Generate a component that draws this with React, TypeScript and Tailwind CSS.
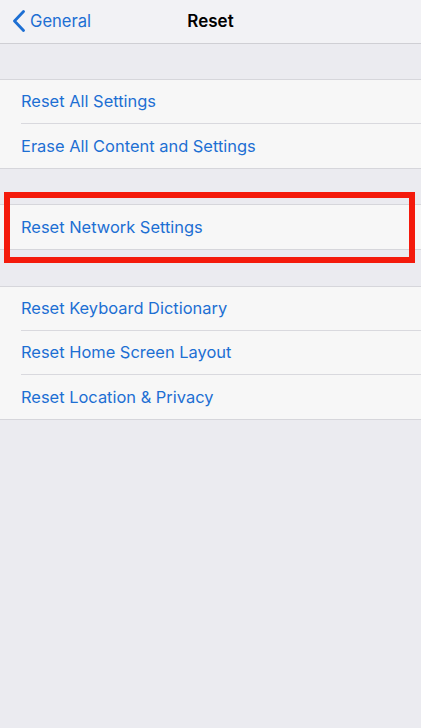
import { ReactNode } from 'react';

const font = { fontFamily: 'Inter, "Noto Sans", sans-serif' };

function Row({ label, last = false }: { label: string; last?: boolean }) {
    return (
        <div className="flex h-[44px] items-stretch bg-[#f7f7f7] pl-[21px]">
            <div className={`flex flex-1 items-center ${last ? '' : 'border-b border-[#d9d9de]'}`}>
                <span className="text-[16.45px] text-[#1d6fd3]">{label}</span>
            </div>
        </div>
    );
}

function Group({ children }: { children: ReactNode }) {
    return <div className="border-y border-[#d6d6db] bg-[#f7f7f7]">{children}</div>;
}

export default function App() {
    return (
        <div className="relative min-h-[728px] w-[421px] bg-[#ebebf0]" style={font}>
            <div className="relative flex h-[44px] items-center border-b border-[#cfcfd4] bg-[#f2f2f5]">
                <div className="flex items-center pl-[12px]">
                    <svg width="14" height="22" viewBox="0 0 14 22" fill="none">
                        <path d="M11.5 1.5 L2.5 11 L11.5 20.5" stroke="#1d6fd3" strokeWidth="2.8" strokeLinecap="round" strokeLinejoin="round" />
                    </svg>
                    <span className="ml-[4px] text-[16.6px] text-[#1d6fd3]">General</span>
                </div>
                <div className="pointer-events-none absolute inset-x-0 text-center text-[17px] font-semibold text-black">Reset</div>
            </div>

            <div className="h-[35px]" />
            <Group>
                <Row label="Reset All Settings" />
                <Row label="Erase All Content and Settings" last />
            </Group>

            <div className="h-[35px]" />
            <Group>
                <Row label="Reset Network Settings" last />
            </Group>

            <div className="h-[36px]" />
            <Group>
                <Row label="Reset Keyboard Dictionary" />
                <Row label="Reset Home Screen Layout" />
                <Row label="Reset Location & Privacy" last />
            </Group>

            <div className="absolute left-[4px] top-[192px] h-[71px] w-[411px] border-[6px] border-[#f41a0c]" />
        </div>
    );
}
